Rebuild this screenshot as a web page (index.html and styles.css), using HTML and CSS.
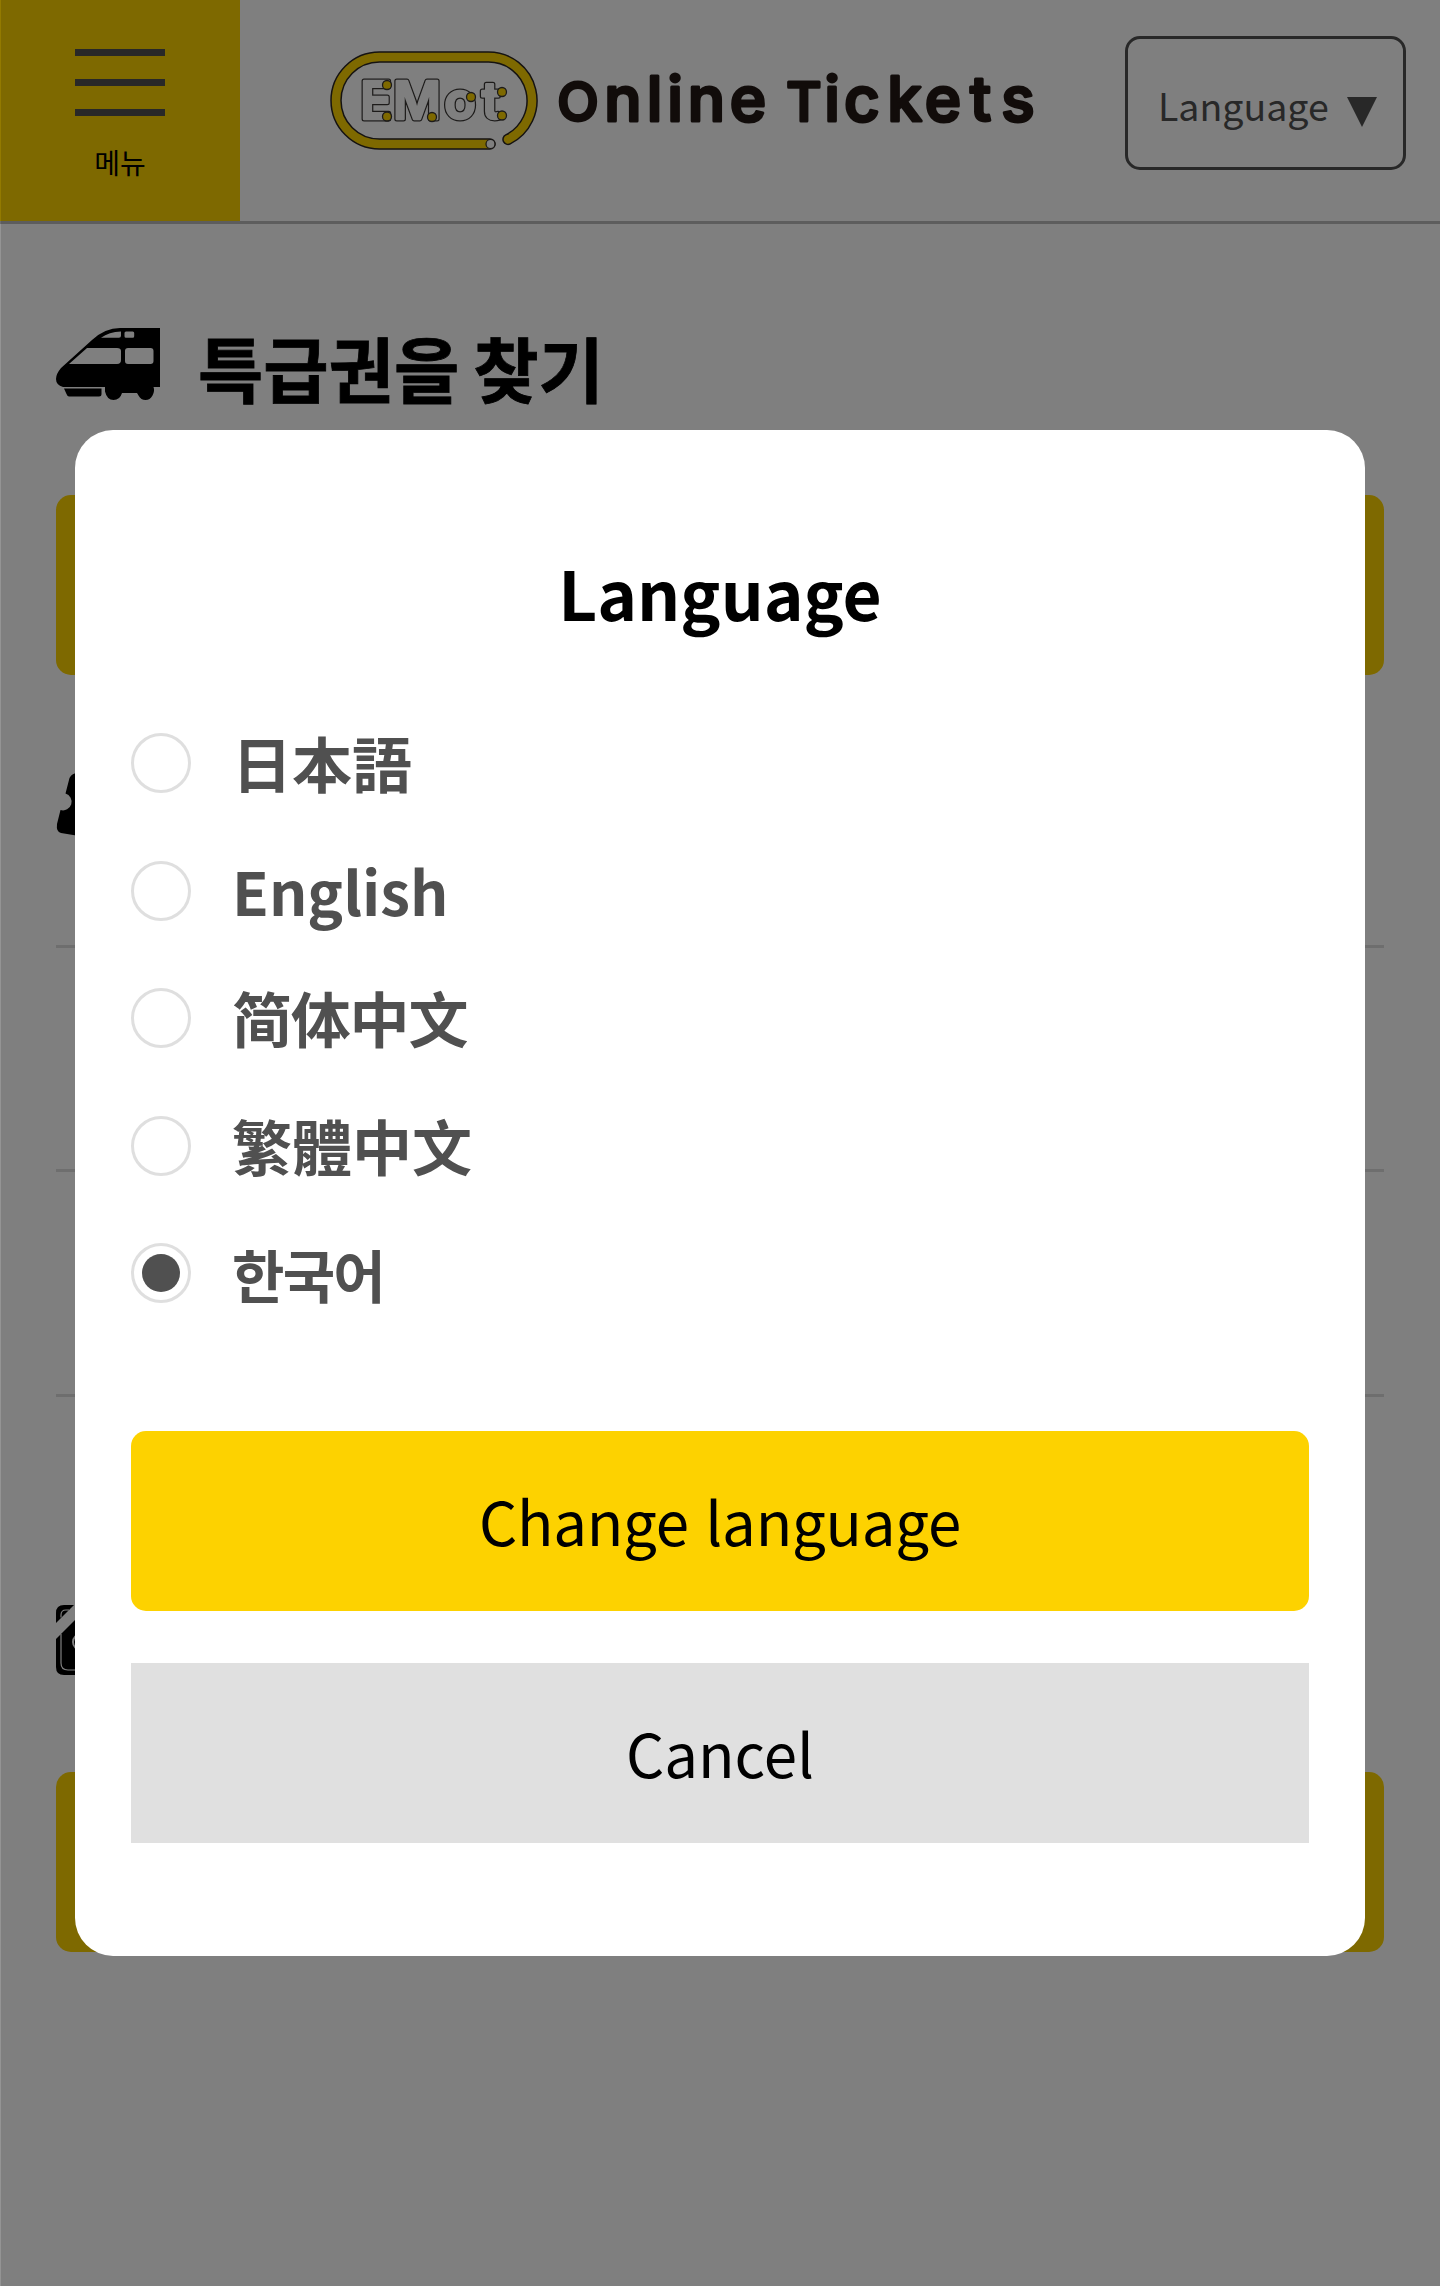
FILE: index.html
```html
<!DOCTYPE html>
<html lang="ko">
<head>
<meta charset="utf-8">
<title>EMot Online Tickets</title>
<link rel="stylesheet" href="styles.css">
</head>
<body>
<div class="page">
  <header class="header">
    <button class="menu"><span class="bar"></span><span class="bar"></span><span class="bar"></span><span class="menu-label">메뉴</span></button>
    <svg class="brand" viewBox="320 40 730 120">
      <g class="ring">
        <path id="ring" d="M490 144H379.500a43.500 43.500 0 0 1 0-87H488.500A43.500 43.500 0 0 1 508 139.400"/>
        <use href="#ring" class="ring-fill"/>
        <circle class="ring-end" cx="490.500" cy="144" r="4.500"/>
      </g>
      <g class="emot">
        <text id="emot" y="119" x="376 417 460 491">EMot</text>
        <use href="#emot" class="emot-fill"/>
      </g>
      <g class="stops"><circle cx="387" cy="85" r="4.500"/><circle cx="387" cy="116.500" r="4.500"/><circle cx="432" cy="117" r="4.500"/><circle cx="471" cy="97" r="4.500"/><circle cx="502" cy="92" r="4.500"/><circle cx="502" cy="115.500" r="4.500"/></g>
      <text class="name" y="120.500" x="578 623 654.500 675 706.500 748 776 804 832 862 904.500 943 980.500 1018"><tspan class="cap">O</tspan>nline <tspan class="cap">T</tspan>ickets</text>
    </svg>
    <button class="lang">Language<svg class="caret" viewBox="0 0 30 30"><path d="M0 0h30L15 30z"/></svg></button>
  </header>
  <main class="main">
    <section class="express">
      <h1 class="heading">
        <svg class="train" viewBox="0 0 104 72"><path fill-rule="evenodd" d="M64 0h40v59h-6.500q1.500 4-1 8.500Q94 72 89.500 72T82.500 67.500L81 65H66q-2 7-8.500 7T49 63.500V59H7Q0 57 0 51q0-5 5-11L36 12Q49 0 64 0zM45 9.700h18q2 0 2-2V3.500Q53 4 45 9.700zM70 3.500q-1.500 0-1.500 1.500v3.200q0 1.500 1.500 1.500h6.700q1.500 0 1.500-1.500V5q0-1.500-1.500-1.500zM31 20L13 36h48q4 0 4-4V23q0-3-4-3zM72 20q-3 0-3 3v10q0 3 3 3h22.500q3 0 3-3V23q0-3-3-3z"/><path d="M8 60.500h37.500V66q0 2.500-2.500 2.500H13q-1.500 0-2.500-2.500z"/></svg>
        <span class="heading-text">특급권을 찾기</span>
      </h1>
      <div class="action"></div>
    </section>
    <section class="tickets">
      <svg class="ticket" viewBox="0 0 104 72"><path d="M22 0L104 18 90 74 5 60Q0 59 1 51L4.500 37A8.500 8.500 0 1 0 9.500 20.500L13.500 5Q16 0 22 0z"/></svg>
      <div class="row"></div><div class="row"></div><div class="row"></div>
    </section>
    <section class="coupons">
      <svg class="pass" viewBox="0 0 104 70"><path d="M8 0h88q8 0 8 8v54q0 8-8 8H8q-8 0-8-8V34L34 0H18L0 18V8Q0 0 8 0z"/><path d="M5 29V58q0 7 7 7h84M5 12.500V10q0-5 5-5h3" class="pass-line"/><circle cx="25" cy="37" r="8" class="pass-ring"/></svg>
      <div class="action"></div>
    </section>
  </main>
</div>
<div class="overlay">
  <form class="modal">
    <h2 class="title">Language</h2>
    <div class="options">
      <label class="option" lang="ja"><span class="radio"></span><span class="option-text">日本語</span></label>
      <label class="option" lang="en"><span class="radio"></span><span class="option-text">English</span></label>
      <label class="option sc" lang="zh-Hans"><span class="radio"></span><span class="option-text">简体中文</span></label>
      <label class="option tc" lang="zh-Hant"><span class="radio"></span><span class="option-text">繁體中文</span></label>
      <label class="option kr" lang="ko"><span class="radio checked"></span><span class="kr-text">한국어</span></label>
    </div>
    <button class="btn primary" type="button">Change language</button>
    <button class="btn cancel" type="button">Cancel</button>
  </form>
</div>
</body>
</html>
```
FILE: styles.css
```css
* { box-sizing: border-box; }
body { margin: 0; background: #fff; font-family: "Noto Sans CJK KR", sans-serif; color: #000; }
button { font: inherit; border: 0; padding: 0; }
h1, h2 { margin: 0; }
.page { height: 2286px; overflow: hidden; }

.header { display: flex; height: 224px; border-bottom: 3px solid #bbb; }
.menu { width: 240px; height: 221px; background: #fdd200; display: flex; flex-direction: column; align-items: center; gap: 23px; padding-top: 49px; }
.bar { width: 90px; height: 7px; background: #505050; }
.menu-label { font-size: 28px; line-height: 38px; margin-top: 4px; }

.brand { width: 730px; height: 120px; margin: 40px 0 0 80px; font-family: Inter, sans-serif; text-anchor: middle; stroke-linejoin: round; stroke-linecap: round; }
.ring { fill: none; stroke: #2b2623; stroke-width: 11.5px; }
.ring-fill { stroke: #fdd200; stroke-width: 8.500px; }
.ring-end { fill: #fff; stroke-width: 1.200px; }
.emot { font-size: 52px; font-weight: 600; fill: #3a3735; stroke: #3a3735; stroke-width: 5px; }
.emot-fill { fill: #fff; stroke: #fff; stroke-width: 2.500px; }
.emot text { fill: inherit; }
.stops { fill: #fdd200; stroke: #3a3735; stroke-width: 1.300px; }
.name { font-size: 62px; font-weight: 500; fill: #231815; stroke: #231815; stroke-width: 3px; }
.cap { font-size: 54px; }

.lang { width: 281px; height: 134px; margin: 36px 34px 0 auto; border: 3px solid #505050; border-radius: 15px; background: none; color: #505050; font-size: 37.500px; line-height: 54px; display: flex; align-items: center; padding: 4px 0 0 30px; }
.caret { width: 30px; height: 30px; fill: #505050; margin: 13px 0 0 18px; }

.main { padding: 104px 56px 0; }
.heading { display: flex; align-items: flex-start; height: 167px; font-size: 71px; line-height: 84px; gap: 38px; }
.heading-text { margin-top: -4px; word-spacing: -6px; -webkit-text-stroke: .8px #000; }
.train { width: 104px; height: 72px; }
.action { height: 180px; background: #fdd200; border-radius: 15px; }
.tickets { padding-top: 98px; }
.ticket { display: block; width: 104px; height: 72px; margin-bottom: 100px; overflow: visible; }
.row { height: 224px; border-top: 3px solid #ddd; }
.row:nth-of-type(2) { height: 225px; }
.row:last-child { height: 211px; }
.pass { display: block; width: 104px; height: 70px; margin-bottom: 97px; }
.pass-line { fill: none; stroke: #fff; stroke-width: 1.200px; }
.pass-ring { fill: none; stroke: #fff; stroke-width: 2px; }

.overlay { position: absolute; inset: 0; height: 2286px; background: rgba(0, 0, 0, .5) padding-box; border-left: 1px solid rgba(0, 0, 0, .42); padding: 430px 75px 0 74px; }
.modal { height: 1526px; border-radius: 38px; background: #fff; padding: 113px 56px 0; font-family: "Noto Sans CJK JP", sans-serif; }
.title { font-size: 67.500px; line-height: 98px; text-align: center; }
.options { display: flex; flex-direction: column; gap: 37.500px; margin-top: 77px; height: 713px; color: #505050; font-size: 60px; line-height: 90px; font-weight: 700; }
.option { display: flex; align-items: center; height: 90px; gap: 41px; }
.option-text { margin-top: -2px; }
.radio { width: 60px; height: 60px; border: 3px solid #dfdfdf; border-radius: 50%; display: grid; place-items: center; }
.checked::before { content: ""; width: 38px; height: 38px; border-radius: 50%; background: #505050; }
.sc { font-family: "Noto Sans CJK SC", sans-serif; letter-spacing: -1.200px; }
.tc { font-family: "Noto Sans CJK TC", sans-serif; }
.kr { font-family: "Noto Sans CJK KR", sans-serif; }
.kr-text { font-size: 57px; letter-spacing: -1.800px; }
.btn { display: block; width: 100%; height: 180px; font-size: 60px; line-height: 90px; color: #000; padding-bottom: 2px; }
.primary { background: #fdd200; border-radius: 15px; letter-spacing: -.25px; }
.cancel { background: #e0e0e0; margin-top: 52px; }
```
